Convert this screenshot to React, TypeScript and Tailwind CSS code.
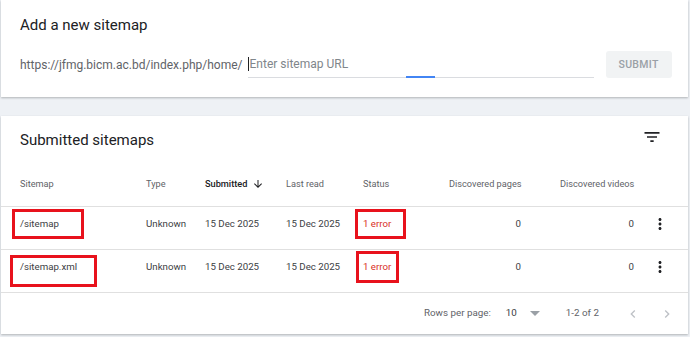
import React from "react"

const rows = [
  { path: "/sitemap", box: "left-[11px] top-[2px] w-[72px] h-[30px]", sbox: "left-[354px] top-[2px] w-[51px] h-[30px]" },
  { path: "/sitemap.xml", box: "left-[9px] top-[5px] w-[87px] h-[32px]", sbox: "left-[355px] top-[1px] w-[43px] h-[32px]" },
]

function FilterIcon() {
  return (
    <svg viewBox="0 0 24 24" className="h-[20px] w-[20px]" fill="#202124">
      <path d="M10 18h4v-2h-4v2zM3 6v2h18V6H3zm3 7h12v-2H6v2z" />
    </svg>
  )
}

function Kebab() {
  return (
    <svg viewBox="0 0 24 24" className="h-[18px] w-[18px]" fill="#202124">
      <path d="M12 8c1.1 0 2-.9 2-2s-.9-2-2-2-2 .9-2 2 .9 2 2 2zm0 2c-1.1 0-2 .9-2 2s.9 2 2 2 2-.9 2-2-.9-2-2-2zm0 6c-1.1 0-2 .9-2 2s.9 2 2 2 2-.9 2-2-.9-2-2-2z" />
    </svg>
  )
}

export default function App() {
  return (
    <div className="h-[337px] w-[690px] overflow-hidden bg-[#eef1f5] font-['Roboto',sans-serif]">
      {/* add sitemap card */}
      <div className="ml-px h-[97px] w-[687px] bg-white shadow-[0_1px_2px_rgba(60,64,67,0.35)]">
        <div className="pl-[19px] pt-[13px] text-[15px] leading-[24px] text-[#202124]">Add a new sitemap</div>
        <div className="mt-[14px] flex h-[27px] items-center pl-[19px]">
          <span className="whitespace-nowrap text-[12px] text-[#5f6368]">https://jfmg.bicm.ac.bd/index.php/home/</span>
          <div className="relative ml-[5px] flex h-[27px] w-[346px] items-center border-b border-[#dadce0]">
            <span className="h-[14px] w-px bg-[#202124]" />
            <span className="ml-px text-[12px] text-[#80868b]">Enter sitemap URL</span>
            <span className="absolute bottom-[-1px] left-[158px] h-[2px] w-[29px] bg-[#4285f4]" />
          </div>
          <button className="ml-[12px] h-[27px] w-[66px] rounded-[3px] bg-[#f1f3f4] text-[10.5px] font-medium tracking-[0.3px] text-[#9aa0a6]">
            SUBMIT
          </button>
        </div>
      </div>

      {/* submitted sitemaps card */}
      <div className="ml-px mt-[19px] h-[218px] w-[687px] bg-white shadow-[0_1px_2px_rgba(60,64,67,0.35)]">
        <div className="flex h-[36px] items-end pl-[19px] pr-[26px]">
          <div className="flex-1 text-[15px] leading-[24px] text-[#202124]">Submitted sitemaps</div>
          <div className="mb-[5px]">
            <FilterIcon />
          </div>
        </div>

        <div className="flex h-[54px] items-start whitespace-nowrap pl-[19px] pt-[24px] text-[9.2px] leading-[16px] text-[#5f6368]">
          <div className="w-[126px]">Sitemap</div>
          <div className="w-[59px]">Type</div>
          <div className="flex w-[81px] items-center font-medium text-[#202124]">
            Submitted
            <svg viewBox="0 0 24 24" className="ml-[5px] h-[12px] w-[12px]" fill="#202124">
              <path d="M20 12l-1.41-1.41L13 16.17V4h-2v12.17l-5.58-5.59L4 12l8 8 8-8z" />
            </svg>
          </div>
          <div className="w-[77px]">Last read</div>
          <div className="w-[86px]">Status</div>
          <div className="w-[72px] text-right">Discovered pages</div>
          <div className="ml-[39px] w-[74px] text-right">Discovered videos</div>
        </div>

        {rows.map((r) => (
          <div key={r.path} className="relative flex h-[43px] items-start whitespace-nowrap border-t border-[#e0e0e0] pl-[19px] pt-[9px] text-[9.7px] leading-[16px] text-[#3c4043]">
            <div className="w-[126px]">{r.path}</div>
            <div className="w-[59px]">Unknown</div>
            <div className="w-[81px]">15 Dec 2025</div>
            <div className="w-[77px]">15 Dec 2025</div>
            <div className="w-[86px] text-[#d93025]">1 error</div>
            <div className="w-[72px] text-right">0</div>
            <div className="ml-[39px] w-[74px] text-right">0</div>
            <div className="ml-[17px] mt-[-1px]">
              <Kebab />
            </div>
            <span className={`absolute border-[3px] border-[#e8121c] ${r.box}`} />
            <span className={`absolute border-[3px] border-[#e8121c] ${r.sbox}`} />
          </div>
        ))}

        <div className="flex h-[42px] items-center border-t border-[#e0e0e0] text-[9.8px] text-[#5f6368]">
          <div className="ml-[423px]">Rows per page:</div>
          <div className="ml-[15px] text-[#3c4043]">10</div>
          <svg viewBox="0 0 10 5" className="ml-[13px] h-[5px] w-[10px]" fill="#9aa0a6">
            <path d="M0 0l5 5 5-5z" />
          </svg>
          <div className="ml-[26px] text-[#5f6368]">1-2 of 2</div>
          <svg viewBox="0 0 24 24" className="ml-[26px] h-[16px] w-[16px]" fill="#bdc1c6">
            <path d="M15.41 7.41L14 6l-6 6 6 6 1.41-1.41L10.83 12z" />
          </svg>
          <svg viewBox="0 0 24 24" className="ml-[18px] h-[16px] w-[16px]" fill="#bdc1c6">
            <path d="M10 6L8.59 7.41 13.17 12l-4.58 4.59L10 18l6-6z" />
          </svg>
        </div>
      </div>
    </div>
  )
}
